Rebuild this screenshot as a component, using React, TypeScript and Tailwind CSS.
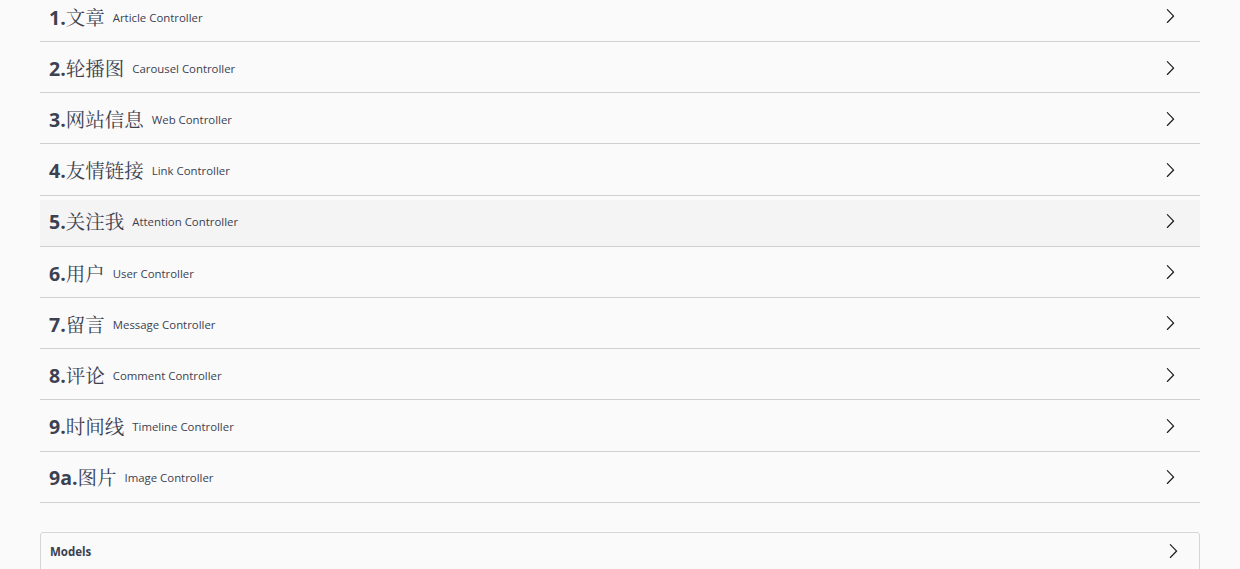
import React from "react";

interface Tag {
  num: string;
  name: string;
  desc: string;
}

const tags: Tag[] = [
  { num: "1.", name: "文章", desc: "Article Controller" },
  { num: "2.", name: "轮播图", desc: "Carousel Controller" },
  { num: "3.", name: "网站信息", desc: "Web Controller" },
  { num: "4.", name: "友情链接", desc: "Link Controller" },
  { num: "5.", name: "关注我", desc: "Attention Controller" },
  { num: "6.", name: "用户", desc: "User Controller" },
  { num: "7.", name: "留言", desc: "Message Controller" },
  { num: "8.", name: "评论", desc: "Comment Controller" },
  { num: "9.", name: "时间线", desc: "Timeline Controller" },
  { num: "9a.", name: "图片", desc: "Image Controller" },
];

const sans = { fontFamily: '"Open Sans", "Noto Sans CJK SC", sans-serif' };
const cjk = { fontFamily: '"Noto Serif CJK SC", "Noto Sans CJK SC", serif' };

function Arrow({ className = "" }: { className?: string }) {
  return (
    <svg width="16.2" height="16.2" viewBox="0 0 20 20" className={`shrink-0 ${className}`}>
      <path
        fill="#1b1b1b"
        d="M13.25 10L6.109 2.58a.697.697 0 0 1 0-.979.68.68 0 0 1 .969 0l7.83 7.908a.697.697 0 0 1 0 .979l-7.83 7.908a.68.68 0 0 1-.969 0 .697.697 0 0 1 0-.979L13.25 10z"
      />
    </svg>
  );
}

export default function App() {
  return (
    <div className="min-h-screen overflow-hidden bg-[#fafafa] px-10 text-[#3b4151]" style={sans}>
      <div className="-mt-[5.2px]">
        {tags.map((tag, idx) => (
          <div
            key={tag.num}
            className={`mb-[4px] flex h-[47.2px] items-center border-b border-[#cfd0d4] pl-[9px] pr-[22px] ${
              idx === 4 ? "bg-[#f4f4f4]" : ""
            }`}
          >
            <div className="flex flex-1 items-center pb-[1px]">
              <span className="text-[19.5px] font-bold leading-none" style={sans}>
                {tag.num}
              </span>
              <span className="text-[19.5px] font-normal leading-none text-[#3b4151]" style={cjk}>
                {tag.name}
              </span>
              <span className="pl-[8px] text-[11.4px] leading-none">{tag.desc}</span>
            </div>
            <Arrow className="mb-[3px]" />
          </div>
        ))}
      </div>

      {/* Models section */}
      <div className="mt-[29px] h-[80px] rounded-[3px] border border-[#d5d6d9]">
        <div className="flex h-[37px] items-center pl-[9px] pr-[18px]">
          <span className="flex-1 text-[11.5px] font-bold">Models</span>
          <Arrow />
        </div>
      </div>
    </div>
  );
}
